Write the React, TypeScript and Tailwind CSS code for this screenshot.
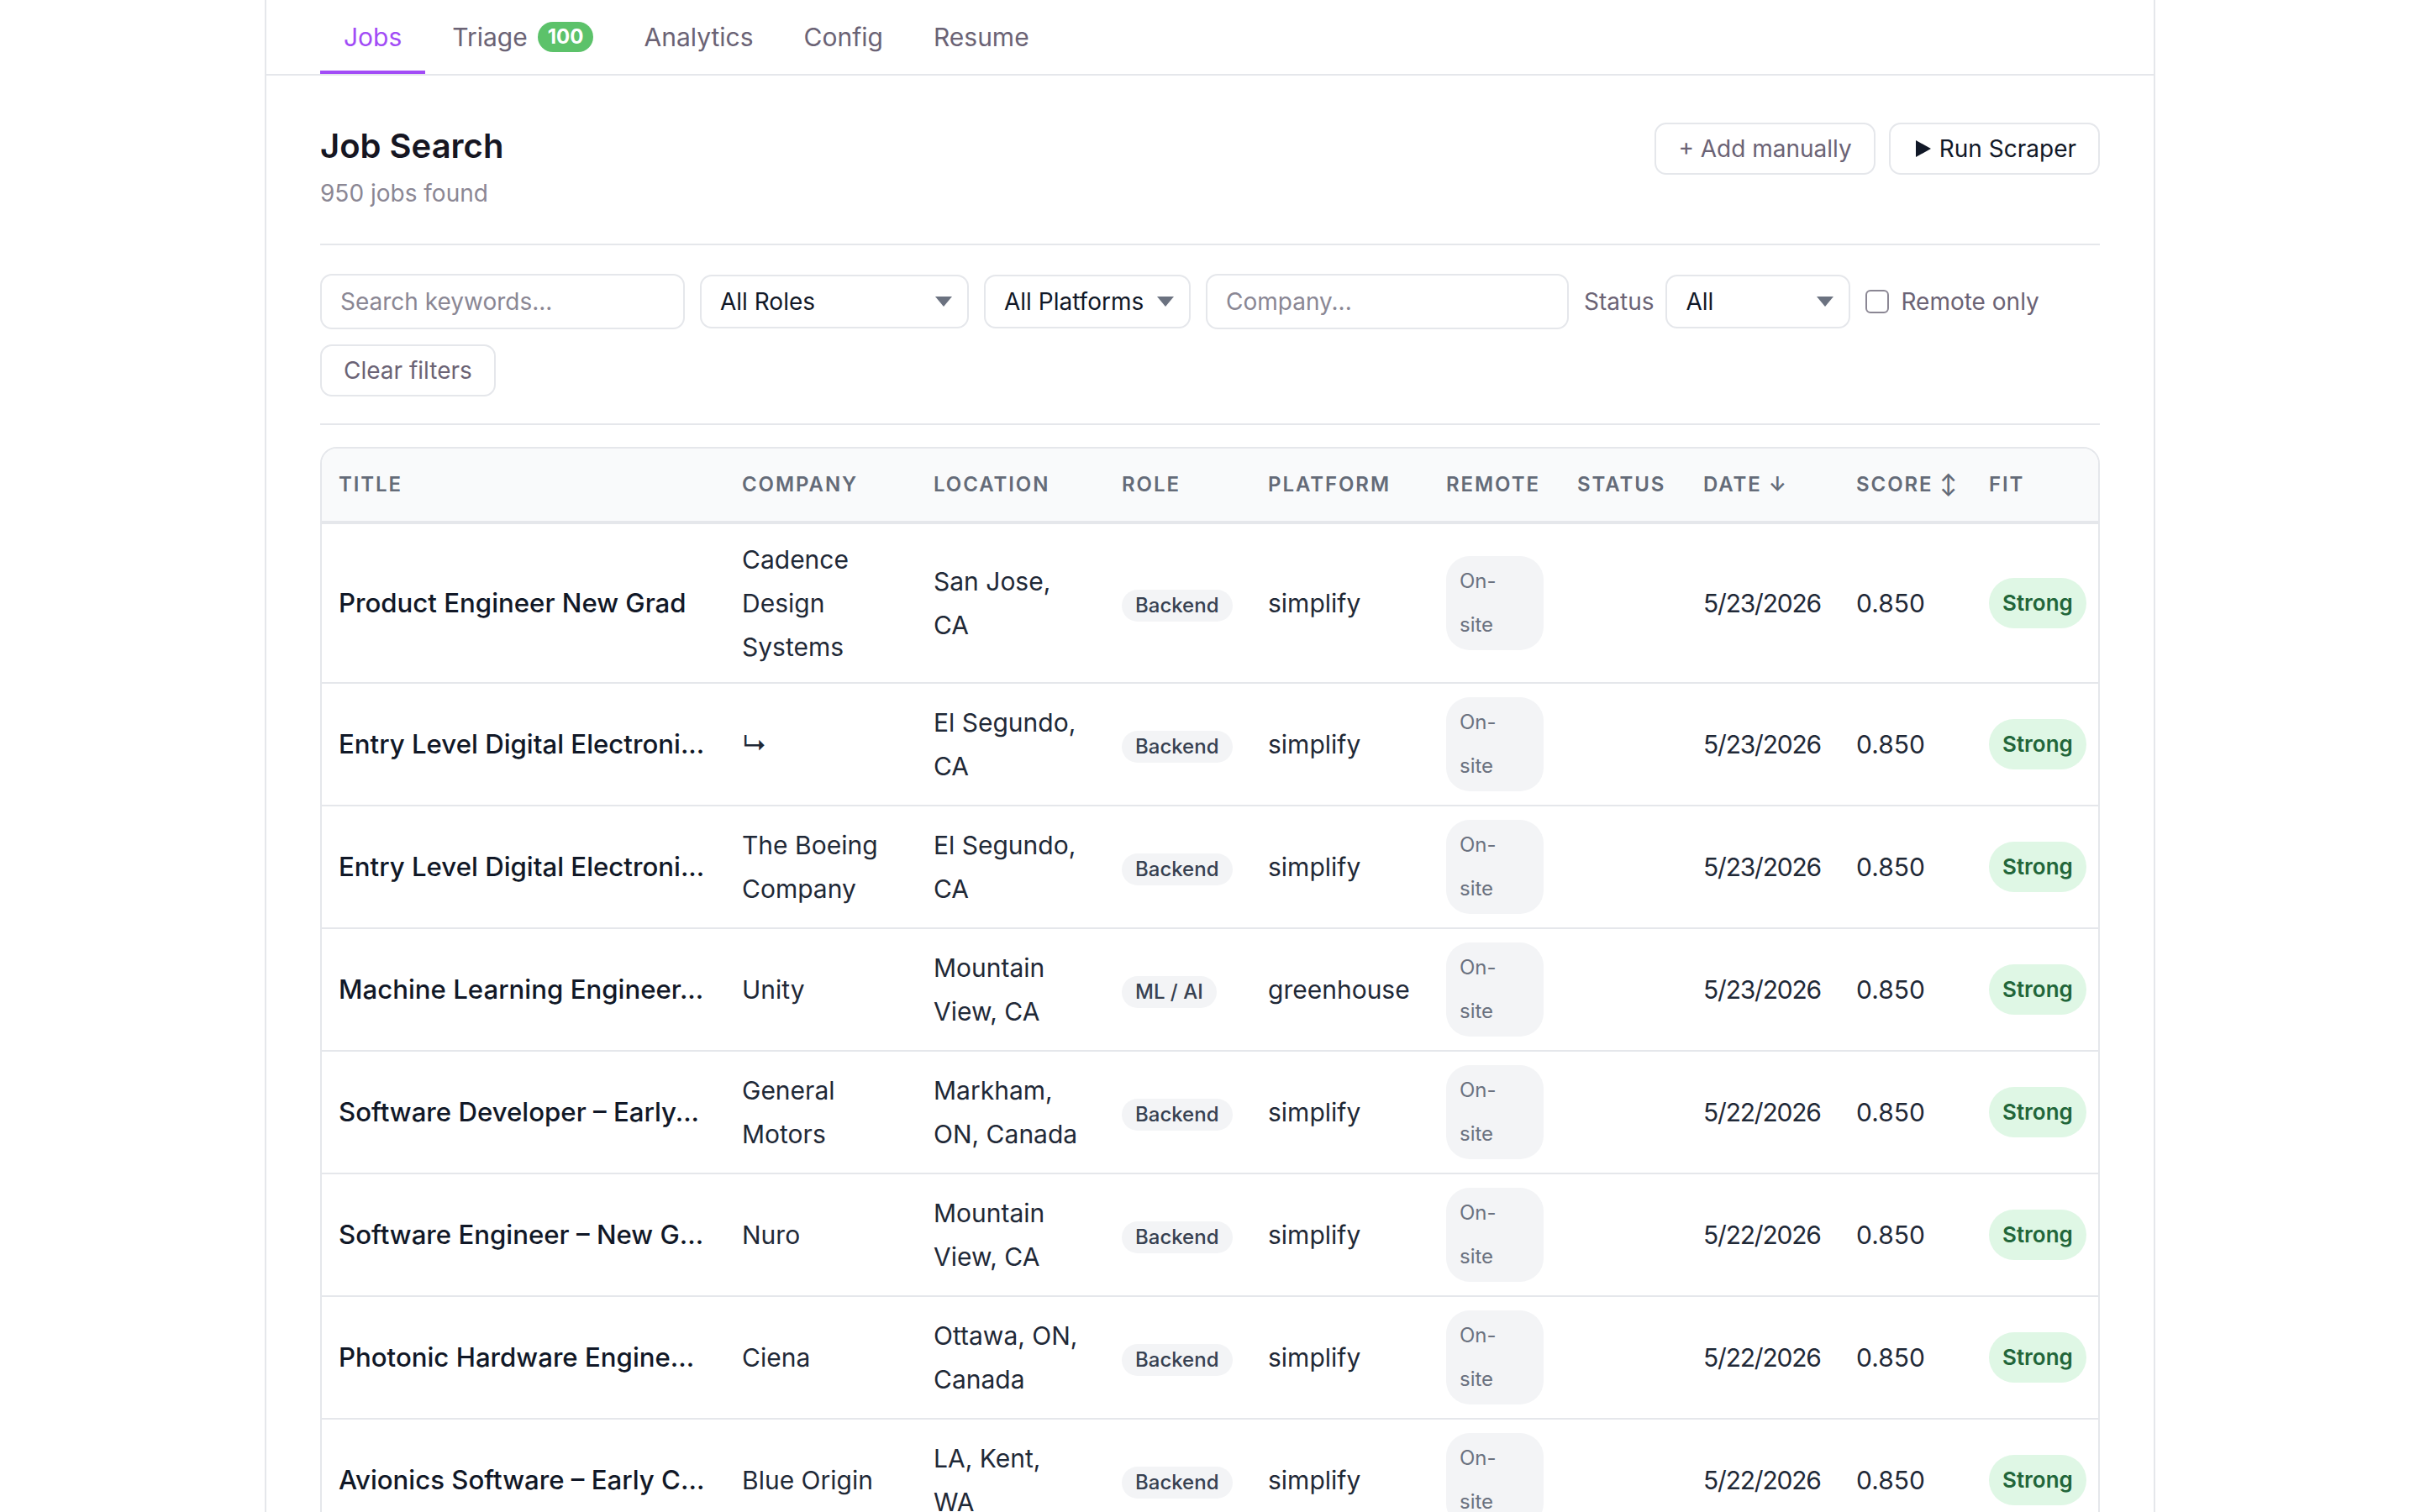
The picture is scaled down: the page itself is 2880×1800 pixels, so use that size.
import React from "react";

type Row = {
  title: string;
  company: string[];
  location: string[];
  role: string;
  platform: string;
  date: string;
};

const rows: Row[] = [
  { title: "Product Engineer New Grad", company: ["Cadence", "Design", "Systems"], location: ["San Jose,", "CA"], role: "Backend", platform: "simplify", date: "5/23/2026" },
  { title: "Entry Level Digital Electroni...", company: ["↳"], location: ["El Segundo,", "CA"], role: "Backend", platform: "simplify", date: "5/23/2026" },
  { title: "Entry Level Digital Electroni...", company: ["The Boeing", "Company"], location: ["El Segundo,", "CA"], role: "Backend", platform: "simplify", date: "5/23/2026" },
  { title: "Machine Learning Engineer...", company: ["Unity"], location: ["Mountain", "View, CA"], role: "ML / AI", platform: "greenhouse", date: "5/23/2026" },
  { title: "Software Developer – Early...", company: ["General", "Motors"], location: ["Markham,", "ON, Canada"], role: "Backend", platform: "simplify", date: "5/22/2026" },
  { title: "Software Engineer – New G...", company: ["Nuro"], location: ["Mountain", "View, CA"], role: "Backend", platform: "simplify", date: "5/22/2026" },
  { title: "Photonic Hardware Engine...", company: ["Ciena"], location: ["Ottawa, ON,", "Canada"], role: "Backend", platform: "simplify", date: "5/22/2026" },
  { title: "Avionics Software – Early C...", company: ["Blue Origin"], location: ["LA, Kent,", "WA"], role: "Backend", platform: "simplify", date: "5/22/2026" },
];

function Caret() {
  return (
    <svg width="10" height="6" viewBox="0 0 10 6" className="shrink-0">
      <polygon points="0,0 10,0 5,6" fill="#6b7280" />
    </svg>
  );
}

function Select({ label, width }: { label: string; width: string }) {
  return (
    <div className={`flex h-[32px] items-center justify-between rounded-[7px] border border-[#e5e7eb] bg-white pl-[11px] pr-[9px] text-[14px] text-[#111827] ${width}`}>
      <span>{label}</span>
      <Caret />
    </div>
  );
}

export default function App() {
  const tabs = ["Jobs", "Triage", "Analytics", "Config", "Resume"];
  const headers = ["Title", "Company", "Location", "Role", "Platform", "Remote", "Status", "Date ↓", "Score ↕", "Fit"];
  return (
    <div className="min-h-screen bg-white font-['Inter',sans-serif] [zoom:2]">
      <div className="mx-auto min-h-[900px] max-w-[1125px] border-x border-[#e5e7eb]">
        <nav className="flex gap-0.5 border-b border-[#e5e7eb] px-8">
          {tabs.map((t, i) => (
            <div
              key={t}
              className={`flex items-center border-b-2 px-3.5 pb-[10px] pt-[12px] text-[15px] leading-5 ${
                i === 0 ? "border-[#a24cf6] text-[#a24cf6]" : "border-transparent text-[#6b6375]"
              }`}
            >
              {t}
              {t === "Triage" && (
                <span className="ml-1.5 h-[18px] rounded-full bg-[#5cc26a] px-1.5 text-[12px] font-bold leading-[18px] text-white">100</span>
              )}
            </div>
          ))}
        </nav>

        <div className="px-8">
          <div className="flex items-start justify-between border-b border-[#e5e7eb] pb-5 pt-7">
            <div>
              <h1 className="text-[20px] font-semibold leading-7 text-[#161622]">Job Search</h1>
              <p className="mt-1 text-[14px] leading-5 text-[#8b8794]">950 jobs found</p>
            </div>
            <div className="flex gap-2">
              <button className="h-[31px] rounded-[7px] border border-[#e5e7eb] bg-white px-[13px] text-[14px] text-[#6b6375]">+ Add manually</button>
              <button className="flex h-[31px] items-center gap-[5px] rounded-[7px] border border-[#e5e7eb] bg-white px-[13px] text-[14px] text-[#111827]">
                <svg width="9" height="10" viewBox="0 0 9 10" className="ml-[2px]">
                  <polygon points="0,0 9,5 0,10" fill="#111827" />
                </svg>
                Run Scraper
              </button>
            </div>
          </div>

          <div className="flex flex-wrap items-center gap-x-[9px] gap-y-[9px] border-b border-[#e5e7eb] pb-4 pt-[17px]">
            <input
              placeholder="Search keywords..."
              className="h-[33px] w-[217px] rounded-[7px] border border-[#e5e7eb] px-[11px] text-[14px] text-[#111827] outline-none placeholder:text-[#8a8794]"
            />
            <Select label="All Roles" width="w-[160px]" />
            <Select label="All Platforms" width="w-[123px]" />
            <input
              placeholder="Company..."
              className="h-[33px] w-[216px] rounded-[7px] border border-[#e5e7eb] px-[11px] text-[14px] text-[#111827] outline-none placeholder:text-[#8a8794]"
            />
            <div className="flex items-center gap-[7px]">
              <span className="text-[14px] text-[#6b6375]">Status</span>
              <Select label="All" width="w-[110px]" />
            </div>
            <label className="flex items-center gap-[7px] text-[14px] text-[#6b6375]">
              <span className="h-[14px] w-[14px] rounded-[3px] border border-[#8b8794] bg-white" />
              Remote only
            </label>
            <button className="h-[31px] rounded-[7px] border border-[#e5e7eb] bg-white px-[13px] text-[14px] text-[#6b6375]">Clear filters</button>
          </div>

          <div className="mt-[13px] overflow-hidden rounded-[10px] border border-[#e5e7eb]">
            <table className="w-full table-fixed border-collapse">
              <colgroup>
                <col className="w-[240px]" />
                <col className="w-[114px]" />
                <col className="w-[112px]" />
                <col className="w-[87px]" />
                <col className="w-[106px]" />
                <col className="w-[78px]" />
                <col className="w-[75px]" />
                <col className="w-[91px]" />
                <col className="w-[79px]" />
                <col className="w-[75px]" />
              </colgroup>
              <thead>
                <tr className="border-b-2 border-[#e5e7eb] bg-[#f9fafb]">
                  {headers.map((h) => (
                    <th
                      key={h}
                      className="h-[44px] whitespace-nowrap px-2.5 text-left text-[12px] font-semibold uppercase leading-4 tracking-[0.08em] text-[#646b78]"
                    >
                      {h}
                    </th>
                  ))}
                </tr>
              </thead>
              <tbody>
                {rows.map((r, i) => (
                  <tr key={i} className="border-b border-[#e5e7eb] text-[15px] leading-[26px] text-[#1f2937]">
                    <td className="whitespace-nowrap px-2.5 py-2 align-middle text-[15.6px] font-medium text-[#111827]">{r.title}</td>
                    <td className="px-2.5 py-2 align-middle">
                      {r.company.map((c) => (
                        <div key={c} className="whitespace-nowrap">{c}</div>
                      ))}
                    </td>
                    <td className="px-2.5 py-2 align-middle">
                      {r.location.map((c) => (
                        <div key={c} className="whitespace-nowrap">{c}</div>
                      ))}
                    </td>
                    <td className="px-2.5 py-2 align-middle">
                      <span className="inline-block whitespace-nowrap rounded-full bg-[#f3f4f6] px-2 py-[1.5px] text-[12px] font-medium leading-4 text-[#374151]">
                        {r.role}
                      </span>
                    </td>
                    <td className="px-2.5 py-2 align-middle">{r.platform}</td>
                    <td className="px-2.5 py-2 align-middle">
                      <span className="block rounded-[14px] bg-[#f3f4f6] px-2 py-0.5 text-[12px] leading-[26px] text-[#6b7280]">
                        On-
                        <br />
                        site
                      </span>
                    </td>
                    <td className="px-2.5 py-2 align-middle"></td>
                    <td className="whitespace-nowrap px-2.5 py-2 align-middle tracking-[-0.04em]">{r.date}</td>
                    <td className="px-2.5 py-2 align-middle">0.850</td>
                    <td className="whitespace-nowrap px-2.5 py-2 align-middle">
                      <span className="inline-block rounded-full bg-[#dff7e5] px-2 py-0.5 text-[13px] font-semibold leading-[26px] text-[#22663a]">
                        Strong
                      </span>
                    </td>
                  </tr>
                ))}
              </tbody>
            </table>
          </div>
          <div className="h-8" />
        </div>
      </div>
    </div>
  );
}
